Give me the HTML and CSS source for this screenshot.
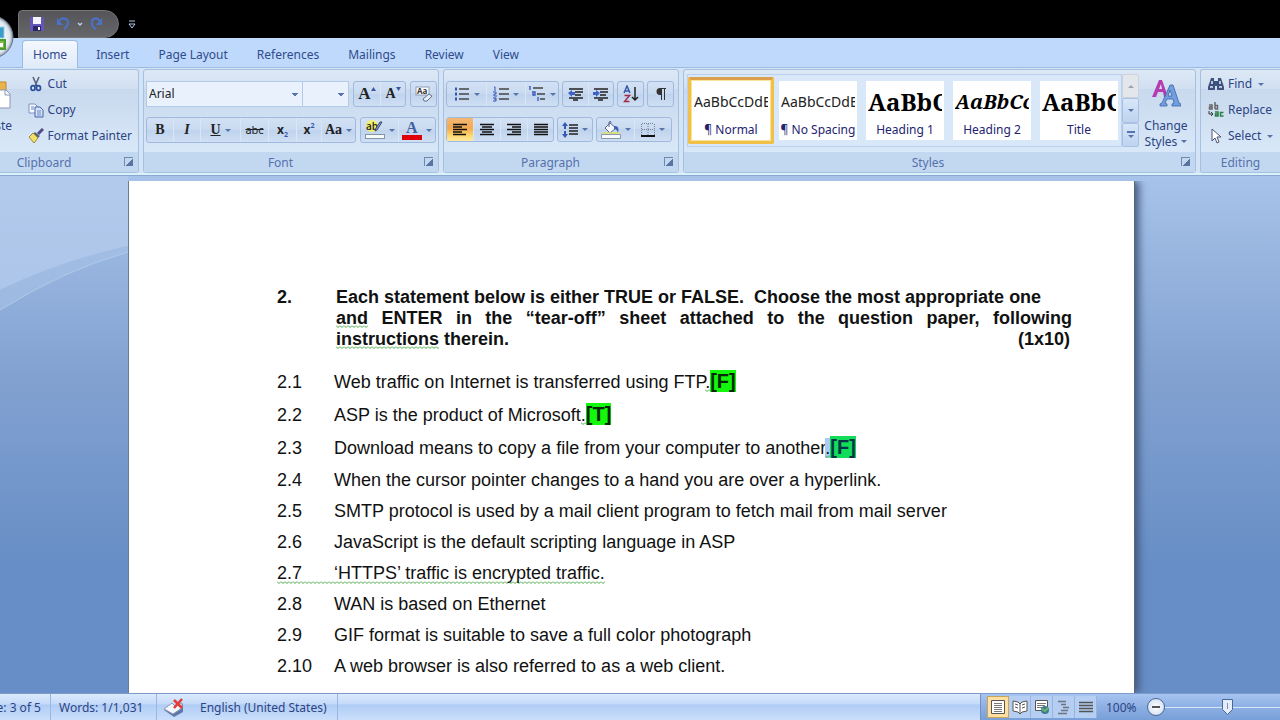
FILE: index.html
```html
<!DOCTYPE html>
<html lang="en">
<head>
<meta charset="utf-8">
<title>Word document</title>
<link rel="stylesheet" href="styles.css">
</head>
<body>
<div class="app">
  <header class="titlebar">
    <div class="quick">
      <button aria-label="Save"><svg width="16" height="16" viewBox="0 0 16 16"><path d="M1 1h13l1 1v13H1z" fill="#6557b8"/><path d="M4 1h8v7H4z" fill="#f6f6ff"/><path d="M4 10h8v5H4z" fill="#29276e"/><path d="M9 11h2v3H9z" fill="#fff"/></svg></button>
      <button aria-label="Undo"><svg width="16" height="16" viewBox="0 0 16 16" fill="none"><path d="M4 5c4-5 10-2 9 3-1 2-2 4-4 5" stroke="#4a72c8" stroke-width="2"/><path d="M2 2v7h6z" fill="#4a72c8"/></svg></button>
      <button class="tiny" aria-label="Undo list"><svg width="6" height="5" viewBox="0 0 6 5"><path d="M1 1l2 2 2-2" fill="none" stroke="#b9c9ea" stroke-width="1.5"/></svg></button>
      <button aria-label="Redo"><svg width="16" height="16" viewBox="0 0 16 16" fill="none"><path d="M11 5C7 0 2 3 3 8c0 3 2 4 4 5" stroke="#4a72c8" stroke-width="2"/><path d="M13 2v7H7z" fill="#4a72c8"/></svg></button>
    </div>
    <button class="custom" aria-label="Customize toolbar"><svg width="8" height="9" viewBox="0 0 8 9"><path d="M1 1h6M1 4h6L4 8z" fill="none" stroke="#b5c7ed"/></svg></button>
    <button class="orb" aria-label="Office button"><svg width="44" height="44" viewBox="0 0 44 44"><defs><radialGradient id="orb"><stop offset=".5" stop-color="#fff"/><stop offset=".85" stop-color="#dce4ee"/><stop offset="1" stop-color="#8795a9"/></radialGradient></defs><circle cx="22" cy="22" r="21" fill="url(#orb)" stroke="#6b7686"/><rect x="24" y="12" width="10" height="11" fill="#3d9cc5" stroke="#8fd1e6"/><rect x="25" y="25" width="10" height="9" fill="#80b944" stroke="#4c9b31" stroke-width="2"/><rect x="29" y="28" width="4" height="4" fill="#fff"/></svg></button>
  </header>
  <nav class="tabs">
    <a class="tab active" href="#">Home</a><a class="tab" href="#">Insert</a><a class="tab" href="#">Page Layout</a><a class="tab" href="#">References</a><a class="tab" href="#">Mailings</a><a class="tab" href="#">Review</a><a class="tab" href="#">View</a>
  </nav>
  <div class="ribbon">
    <section class="group clipboard">
      <div class="body">
        <button class="paste"><svg width="28" height="32" viewBox="0 0 28 32"><path d="M2 4h21v23H2z" fill="#e9b44c" stroke="#bd8a2c"/><path d="M8 1h9v6H8z" fill="#aab4c4"/><path d="M12 12h11l4 4v14H12z" fill="#fff" stroke="#8b96b4"/><path d="M22 12v5h5" fill="none" stroke="#8b96b4"/></svg><span>Paste</span></button>
        <div class="stack">
          <button class="cmd"><svg width="16" height="16" viewBox="0 0 16 16" fill="none"><path d="M5 1l4 9M11 1L7 10" stroke="#56647f" stroke-width="1.6"/><ellipse cx="5" cy="12" rx="2" ry="2.4" stroke="#2d4fa0" stroke-width="1.7"/><ellipse cx="10.500" cy="12" rx="2" ry="2.400" stroke="#2d4fa0" stroke-width="1.7"/></svg>Cut</button>
          <button class="cmd"><svg width="16" height="16" viewBox="0 0 16 16"><path d="M1 2h6l2 2v7H1z" fill="#f6f9ff" stroke="#7d92c2"/><path d="M7 5h5l3 3v7H7z" fill="#d7e3fa" stroke="#4560a5"/><path d="M9 9h4M9 11h4M9 13h4M3 5h3M3 7h3" stroke="#6d88c5"/></svg>Copy</button>
          <button class="cmd"><svg width="16" height="16" viewBox="0 0 16 16"><path d="M15 1l-5 5" stroke="#514b88" stroke-width="3"/><path d="M7 4l5 4-2 2-5-4z" fill="#5b6478"/><path d="M5 5l5 5-4 5-5-6z" fill="#f0df69" stroke="#9a8a3a"/></svg>Format Painter</button>
        </div>
      </div>
      <footer class="label"><span>Clipboard</span><button class="launch" aria-label="Clipboard options"></button></footer>
    </section>
    <section class="group font">
      <div class="body rows">
        <div class="row">
          <div class="pair"><select class="family" aria-label="Font"><option>Arial</option></select><select class="size" aria-label="Font size"><option></option></select></div>
          <div class="set"><button class="w26 serif big" aria-label="Grow font">A<svg class="sup" width="5" height="4" viewBox="0 0 5 4"><path d="M0 4l2.500-4L5 4z" fill="#39599e"/></svg></button><button class="w25 serif" aria-label="Shrink font">A<svg class="sup" width="5" height="4" viewBox="0 0 5 4"><path d="M0 0h5L2.500 4z" fill="#39599e"/></svg></button></div>
          <div class="set"><button class="w25" aria-label="Clear formatting"><svg width="18" height="18" viewBox="0 0 18 18"><rect x="1" y="2" width="13" height="8" fill="#fff" stroke="#8e9bb6"/><text x="2" y="9" font-family="Open Sans, sans-serif" font-size="8" font-weight="700" fill="#333">Aa</text><path d="M8 14l6-5 3 2-5 5H9z" fill="#e9edf6" stroke="#65728f"/></svg></button></div>
        </div>
        <div class="row">
          <div class="set"><button class="w26 serif">B</button><button class="w27 serif"><i>I</i></button><button class="w40 serif" aria-label="Underline"><u>U</u><b class="arrow"></b></button><button class="w28 small"><s>abc</s></button><button class="w28 cross" aria-label="Subscript">x<sub>2</sub></button><button class="w25 cross" aria-label="Superscript">x<sup>2</sup></button><button class="w34 serif" aria-label="Change case">Aa<b class="arrow"></b></button></div>
          <div class="set"><button class="w37" aria-label="Highlight"><svg width="20" height="20" viewBox="0 0 20 20"><circle cx="7" cy="6" r="6" fill="#f2f06a"/><text x="1" y="10" font-family="Open Sans, sans-serif" font-size="10" font-weight="600" fill="#222">ab</text><path d="M17 2l-5 8-2 1 1-3 4-6z" fill="#8ba0cf" stroke="#35466f"/><rect x=".5" y="14.500" width="19" height="4" fill="#f7fbff" stroke="#8695a5"/></svg><b class="arrow"></b></button><button class="w37" aria-label="Font color"><svg width="20" height="20" viewBox="0 0 20 20"><text x="4" y="13" font-family="Liberation Serif, serif" font-size="16" font-weight="700" fill="#3f5f9f">A</text><path d="M0 15h20v5H0z" fill="#e00008"/></svg><b class="arrow"></b></button></div>
        </div>
      </div>
      <footer class="label"><span>Font</span><button class="launch" aria-label="Font options"></button></footer>
    </section>
    <section class="group paragraph">
      <div class="body rows">
        <div class="row">
          <div class="set"><button class="w39" aria-label="Bullets"><svg width="16" height="16" viewBox="0 0 16 16"><path d="M5 3h10M5 8h10M5 13h10" stroke="#444" stroke-width="1.300"/><path d="M1 3h2M1 8h2M1 13h2" stroke="#3454b4" stroke-width="3"/></svg><b class="arrow"></b></button><button class="w39" aria-label="Numbering"><svg width="16" height="16" viewBox="0 0 16 16"><path d="M6 3h10M6 8h10M6 13h10" stroke="#444" stroke-width="1.300"/><path d="M1 1h1v4M0 6h3v2H1v2h3M0 12h3v3H0M1 13h2" fill="none" stroke="#3454b4"/></svg><b class="arrow"></b></button><button class="w33" aria-label="Multilevel list"><svg width="18" height="16" viewBox="0 0 18 16"><path d="M5 2h10M9 8h8M12 13h5" stroke="#444" stroke-width="1.300"/><path d="M1 0h1v4M4 6h3v3H5v-2M10 11v4" fill="none" stroke="#3454b4" stroke-width="1.300"/></svg><b class="arrow"></b></button></div>
          <div class="set"><button class="w25" aria-label="Decrease indent"><svg width="16" height="16" viewBox="0 0 16 16"><path d="M1 3h14M7 6h8M7 9h6M1 12h14M5 14h5" stroke="#222" stroke-width="1.500"/><path d="M0 7l4-3v2h3v3H4v2z" fill="#3c62c8"/></svg></button><button class="w25" aria-label="Increase indent"><svg width="16" height="16" viewBox="0 0 16 16"><path d="M1 3h14M7 6h8M7 9h6M1 12h14M5 14h5" stroke="#222" stroke-width="1.500"/><path d="M7 7L3 4v2H0v3h3v2z" fill="#3c62c8"/></svg></button></div>
          <div class="set"><button class="w25" aria-label="Sort"><svg width="16" height="18" viewBox="0 0 16 18"><g fill="none" stroke-width="1.500"><path d="M1 8l3-7 3 7M2 6h4" stroke="#3658ae"/><path d="M1.500 10.500h5l-5 6h5" stroke="#a32d49"/><path d="M12 2v13M9 12l3 3 3-3" stroke="#222"/></g></svg></button></div>
          <div class="set"><button class="w25" aria-label="Show marks"><svg width="14" height="14" viewBox="0 0 14 14"><path d="M12 1H6a3 3 0 000 7h1v5h1V2h2v11h1V2h1z" fill="#333"/></svg></button></div>
        </div>
        <div class="row low">
          <div class="set"><button class="w26 on" aria-label="Align left"><svg width="16" height="14" viewBox="0 0 16 14"><path d="M1 1.500h14M1 4h9M1 6.500h14M1 9h9M1 11.500h13" stroke="#111" stroke-width="1.300"/></svg></button><button class="w27" aria-label="Center"><svg width="16" height="14" viewBox="0 0 16 14"><path d="M1 1.500h14M3 4h10M1 6.500h14M3 9h10M1 11.500h14" stroke="#111" stroke-width="1.300"/></svg></button><button class="w27" aria-label="Align right"><svg width="16" height="14" viewBox="0 0 16 14"><path d="M1 1.500h14M6 4h9M1 6.500h14M6 9h9M1 11.500h14" stroke="#111" stroke-width="1.300"/></svg></button><button class="w26" aria-label="Justify"><svg width="16" height="14" viewBox="0 0 16 14"><path d="M1 1.500h14M1 4h14M1 6.500h14M1 9h14M1 11.500h14" stroke="#111" stroke-width="1.300"/></svg></button></div>
          <div class="set"><button class="w34" aria-label="Line spacing"><svg width="16" height="16" viewBox="0 0 16 16"><path d="M7 3h9M7 6h9M7 9h9M7 12h9" stroke="#222" stroke-width="1.300"/><path d="M3 0L0 4h2v3h2V4h2zM3 16l-3-4h2V9h2v3h2z" fill="#3559b4"/></svg><b class="arrow"></b></button></div>
          <div class="set"><button class="w37" aria-label="Shading"><svg width="20" height="18" viewBox="0 0 20 18"><path d="M9 2l6 5-6 5-5-5z" fill="#f7f8ff" stroke="#56658c"/><path d="M8 6V1q2-2 2 1" fill="none" stroke="#56658c"/><path d="M13 5q6-1 4 7-1-4-4-4z" fill="#3e62b5"/><path d="M1 12h18" stroke="#dbe264" stroke-width="1.500"/><path d="M.5 13.500h19v4H.5z" fill="#f8fbff" stroke="#8b98a9"/></svg><b class="arrow"></b></button><button class="w37" aria-label="Borders"><svg width="14" height="14" viewBox="0 0 14 14"><path d="M1 .5h12M.5 1v11M13.500 1v11M7 1v11M1 6.500h12" stroke="#777f98" stroke-dasharray="1 1"/><path d="M0 13h14" stroke="#111" stroke-width="2"/></svg><b class="arrow"></b></button></div>
        </div>
      </div>
      <footer class="label"><span>Paragraph</span><button class="launch" aria-label="Paragraph options"></button></footer>
    </section>
    <section class="group styles">
      <div class="body">
        <div class="gallery">
          <button class="style chosen"><span class="sample">AaBbCcDdE</span><span>¶ Normal</span></button>
          <button class="style"><span class="sample">AaBbCcDdE</span><span>¶ No Spacing</span></button>
          <button class="style"><span class="sample head">AaBbC</span><span>Heading 1</span></button>
          <button class="style"><span class="sample head2">AaBbCc</span><span>Heading 2</span></button>
          <button class="style"><span class="sample head">AaBbC</span><span>Title</span></button>
        </div>
        <div class="scroll"><button class="dim" aria-label="Up"><b class="arrow up"></b></button><button aria-label="Down"><b class="arrow"></b></button><button class="more" aria-label="More"><b class="arrow"></b></button></div>
        <button class="change"><svg width="30" height="30" viewBox="0 0 30 30"><path d="M1 19L8 2h3l6 17h-4l-1-5H7l-2 5zM8 11h3L10 6z" fill="#b43cae"/><path d="M9 28v-2l2-1 8-18h3l6 18 2 1v2h-9v-2l2-1-1-4h-6l-2 4 2 1v2zM17 18h4l-2-6z" fill="#6f9fe0" stroke="#3f63a7" stroke-width=".8"/></svg><span>Change</span><span>Styles <b class="arrow"></b></span></button>
      </div>
      <footer class="label"><span>Styles</span><button class="launch" aria-label="Styles options"></button></footer>
    </section>
    <section class="group editing">
      <div class="body">
        <div class="stack">
          <button class="cmd"><svg width="16" height="16" viewBox="0 0 16 16"><path d="M3 2h3v3h4V2h3l3 9v3H9v-4H7v4H0v-3z" fill="#3e527e"/><path d="M2 11h3M11 11h3M4 5v3M12 5v3" stroke="#dce7fb" stroke-width="1.500"/></svg>Find<b class="arrow"></b></button>
          <button class="cmd"><svg width="16" height="16" viewBox="0 0 16 16"><g fill="none" stroke-width="1.500"><path d="M1 3h3v4H1.500V5H4M7 0v7M7 3.500h2.500V7H7" stroke="#666"/><path d="M7 10h3v4H7.500v-2H10M15.500 10.500h-3v3.500h3" stroke="#278044"/><path d="M1 9v3h4M3 10l2 2-2 2" stroke="#333" stroke-width="1"/></g></svg>Replace</button>
          <button class="cmd"><svg width="16" height="16" viewBox="0 0 16 16"><path d="M4 1v12l3-3 2 5 2-1-2-5h4z" fill="#fff" stroke="#4d5673"/></svg>Select<b class="arrow"></b></button>
        </div>
      </div>
      <footer class="label"><span>Editing</span></footer>
    </section>
  </div>
  <main class="workspace">
    <svg class="swoosh" width="128" height="140" viewBox="0 0 128 140"><path d="M0 0h128v70Q60 85 0 114z" fill="#b8cfee" opacity=".7"/><path d="M0 114Q60 85 128 70v6Q64 94 0 134z" fill="#a8c2e5" opacity=".6"/><path d="M0 134Q64 94 128 76" fill="none" stroke="#b0cbec"/></svg>
    <article class="page">
      <div class="line question"><span>2.</span>
        <div class="prompt"><div>Each statement below is either TRUE or FALSE.&nbsp; Choose the most appropriate one</div><div class="justify"><span class="wavy">and</span> ENTER in the “tear-off” sheet attached to the question paper, following</div><div class="ends"><span><span class="wavy">instructions</span> therein.</span><span>(1x10)</span></div></div>
      </div>
      <div class="line tall"><span>2.1</span><p>Web traffic on Internet is transferred using FTP<span class="wavy">.</span><mark>[F]</mark></p></div>
      <div class="line tall"><span>2.2</span><p>ASP is the product of Microsoft<span class="wavy">.</span><mark>[T]</mark></p></div>
      <div class="line tall"><span>2.3</span><p>Download means to copy a file from your computer to another<span class="wavy picked">.</span><mark class="picked">[F]</mark></p></div>
      <div class="line"><span>2.4</span><p>When the cursor pointer changes to a hand you are over a hyperlink.</p></div>
      <div class="line"><span>2.5</span><p>SMTP protocol is used by a mail client program to fetch mail from mail server</p></div>
      <div class="line"><span>2.6</span><p>JavaScript is the default scripting language in ASP</p></div>
      <div class="line"><div class="wavy whole"><span>2.7</span><p>‘HTTPS’ traffic is encrypted traffic.</p></div></div>
      <div class="line"><span>2.8</span><p>WAN is based on Ethernet</p></div>
      <div class="line"><span>2.9</span><p>GIF format is suitable to save a full color photograph</p></div>
      <div class="line"><span>2.10</span><p>A web browser is also referred to as a web client.</p></div>
    </article>
  </main>
  <footer class="status">
    <div class="cell pageno">Page: 3 of 5</div>
    <div class="cell words">Words: 1/1,031</div>
    <div class="cell lang"><svg width="22" height="20" viewBox="0 0 22 20"><path d="M1 12l8-6 4 3 7-3v8l-9 5z" fill="#5d78a8"/><path d="M1 11l8-6 3 3 7-3v5l-9 6z" fill="#f3f6fc" stroke="#8796b4"/><path d="M11 2l8 8M19 1l-8 9" stroke="#e43c35" stroke-width="2.500"/></svg><span>English (United States)</span></div>
    <div class="cell rest"></div>
    <div class="views">
      <button class="on" aria-label="Print layout"><svg width="16" height="16" viewBox="0 0 16 16"><path d="M1.500 1.500h13v13h-13z" fill="#fff" stroke="#555"/><path d="M4 4.500h8M4 6.500h8M4 8.500h8M4 10.500h8M4 12.500h8" stroke="#777"/></svg></button>
      <button aria-label="Reading"><svg width="16" height="16" viewBox="0 0 16 16"><path d="M1 2l5 1 2 2 2-2 5-1v10l-5 1-2 2-2-2-5-1z" fill="#fff" stroke="#555"/><path d="M8 5v9M3 5l3 1M3 8l3 1M10 6l3-1M10 9l3-1" stroke="#555"/></svg></button>
      <button aria-label="Web layout"><svg width="16" height="16" viewBox="0 0 16 16"><path d="M1.500 1.500h12v10h-12z" fill="#fff" stroke="#555"/><path d="M3 4.500h9M3 6.500h8M3 8.500h6" stroke="#777"/><circle cx="11" cy="11" r="4" fill="#397d91"/><path d="M8 10l3 2 3-3" stroke="#6bb66a" stroke-width="2" fill="none"/></svg></button>
      <button aria-label="Outline"><svg width="16" height="16" viewBox="0 0 16 16"><path d="M2 2.500h8M5 5.500h5M7 8.500h6M5 11.500h7M2 14.500h9" stroke="#6d7582" stroke-width="1.300"/></svg></button>
      <button aria-label="Draft"><svg width="16" height="16" viewBox="0 0 16 16"><path d="M1 3.500h14M1 6.500h14M1 9.500h14M1 12.500h14" stroke="#555" stroke-width="1.500"/></svg></button>
    </div>
    <span class="percent">100%</span>
    <button class="minus" aria-label="Zoom out"></button>
    <input class="zoom" type="range" min="0" max="100" value="55" aria-label="Zoom">
  </footer>
</div>
</body>
</html>
```

FILE: styles.css
```css
* { box-sizing: border-box; }
body { margin: 0; font: 12px/16px "Noto Sans", "Open Sans", sans-serif; color: #2b4484; }
button { font: inherit; color: inherit; background: none; border: 0; padding: 0; margin: 0; display: flex; align-items: center; justify-content: center; }
svg { flex: none; display: block; }
.app { display: flex; flex-direction: column; height: 100vh; min-height: 480px; overflow: hidden; }
.arrow { flex: none; display: inline-block; border: 3px solid transparent; border-top-color: #5775ad; border-bottom: 0; }
.arrow.up { border-top: 0; border-bottom: 3px solid #9aa3b2; }

.titlebar { position: relative; z-index: 1; display: flex; align-items: flex-end; flex: none; height: 38px; background: #000; padding: 0 0 0 18px; }
.quick { display: flex; align-items: center; gap: 10px; height: 28px; padding: 0 13px 0 10px; border: 1px solid #777; border-radius: 4px 14px 14px 0; background: linear-gradient(#555559, #66676b); }
.quick .tiny { margin: 0 -4px; }
.custom { height: 28px; margin-left: 9px; }
.orb { position: absolute; left: -30px; top: 15px; }

.tabs { display: flex; flex: none; height: 30px; padding: 2px 0 0 22px; background: #bfd9fc; border-bottom: 1px solid #9bbbe3; }
.tab { display: flex; align-items: center; margin-bottom: -1px; padding: 1px 10px 0; border: 1px solid transparent; color: #304b8c; text-decoration: none; margin-right: 7px; }
.tab.active { border-color: #9bbbe3; border-bottom: 0; border-radius: 4px 4px 0 0; background: linear-gradient(#f4f8fe, #dfeaf8); }

.ribbon { display: flex; flex: none; gap: 4px; height: 108px; padding: 1px 0 2px; background: #d4e4f7; border-bottom: 1px solid #8ba8cf; box-shadow: inset 0 -2px #d9f2fa; overflow: hidden; }
.group { display: flex; flex-direction: column; flex: none; border: 1px solid #a6c0e0; border-radius: 3px; background: linear-gradient(#dde8f5, #d2e0f2 18%, #c8d9ee 19%, #d9e8f8 80%); overflow: hidden; }
.body { display: flex; flex: 1; min-height: 0; }
.label { display: flex; align-items: center; flex: none; height: 20px; padding-top: 2px; background: #c2d8f0; color: #5671ad; }
.label span { flex: 1; text-align: center; padding-right: 7px; }
.launch { width: 9px; height: 9px; margin: 0 5px 4px 0; border: solid #7188b0; border-width: 1px 0 0 1px; background: linear-gradient(135deg, transparent 55%, #5a739f 56%); }
.clipboard { width: 139px; border-left: 0; border-radius: 0 3px 3px 0; }
.clipboard .body { justify-content: flex-end; padding-right: 6px; }
.clipboard .label span { padding-right: 45px; }
.clipboard .launch { margin-left: -9px; }
.paste { flex: none; flex-direction: column; justify-content: flex-start; gap: 8px; width: 36px; margin-right: 13px; padding-top: 8px; }
.stack { display: flex; flex-direction: column; flex: none; gap: 10px; padding-top: 6px; }
.cmd { justify-content: flex-start; gap: 4px; height: 16px; white-space: nowrap; }
.cmd .arrow { margin-left: 2px; }

.font { width: 296px; }
.paragraph { width: 236px; }
.rows { flex-direction: column; gap: 10px; padding: 11px 2px 0; }
.row { display: flex; gap: 4px; }
.paragraph .row { gap: 3px; }
.set { display: flex; flex: none; height: 26px; border: 1px solid #a0b9de; border-radius: 3px; background: linear-gradient(#d3e1f4, #c9daf0 48%, #bfd3ed 50%, #cfdff3); }
.low .set { height: 25px; }
.set button { gap: 4px; color: #222; border-left: 1px solid #d9e6f6; }
.set button:first-child { border-left: 0; }
.set .on { background: linear-gradient(#f2b878, #f6a94e 45%, #ffd66d 75%, #ffeaa0); }
.w25 { width: 25px; } .w26 { width: 26px; } .w27 { width: 27px; } .w28 { width: 28px; }
.w33 { width: 33px; } .w34 { width: 34px; } .w37 { width: 37px; } .w39 { width: 39px; } .w40 { width: 40px; }
.serif { font: bold 14px/16px "Liberation Serif", serif; }
.big { font-size: 17px; }
.set .big, .set .w25.serif { gap: 0; }
.sup { align-self: flex-start; margin-top: 5px; }
.small { font-size: 11px; }
.cross { font-weight: 700; }
.set .cross { gap: 0; }
.cross sub, .cross sup { font-size: 7px; line-height: 8px; color: #3658b0; }
.cross sub { align-self: flex-end; margin-bottom: 3px; }
.cross sup { align-self: flex-start; margin-top: 4px; }
.pair { display: flex; height: 26px; }
select { appearance: none; border: 1px solid #b3cae8; border-radius: 0; padding: 0 2px; font: inherit; color: #222; background: linear-gradient(to bottom right, #5775ad 50%, transparent 51%) right 4px center / 3px 3px no-repeat, linear-gradient(to bottom left, #5775ad 50%, transparent 51%) right 7px center / 3px 3px no-repeat, #e9f1fc; }
.family { width: 157px; }
.size { width: 46px; border-left: 0; }

.styles { flex: 1 0 512px; }
.styles .label span { padding-right: 9px; }
.styles .body { padding: 4px 2px 5px 3px; }
.gallery { display: flex; flex: 1; gap: 1px; border: 1px solid #bad0ec; background: #d9e8f9; overflow: hidden; padding-top: 2px; }
.style { flex: none; width: 86px; height: 67px; flex-direction: column; justify-content: flex-start; border: 4px solid #d9e8f9; background: #fff; color: #23236f; padding-top: 2px; white-space: nowrap; overflow: hidden; }
.style.chosen { border: 3px solid #f0c048; border-top-color: #dc9f4c; border-radius: 2px; box-shadow: inset 0 0 0 1px #fae49c; padding-top: 3px; }
.sample { width: 74px; height: 39px; line-height: 37px; font-size: 14px; color: #222; text-align: left; overflow: hidden; }
.head { font: bold 24px/37px "Noto Serif", "Liberation Serif", serif; color: #000; }
.head2 { font: italic bold 20px/37px "Noto Serif", "Liberation Serif", serif; color: #000; }
.scroll { display: flex; flex-direction: column; flex: none; width: 17px; }
.scroll button { flex: 1; border: 1px solid #a9c2e4; border-radius: 2px; background: linear-gradient(#d8e7f9, #bed3ef); }
.scroll .dim { background: #e3e6eb; border-color: #cdd3dd; }
.scroll .more { flex-direction: column; gap: 2px; }
.more::before { content: ""; width: 8px; height: 2px; background: #5775ad; }
.change { flex: none; flex-direction: column; justify-content: flex-start; width: 54px; padding-top: 4px; }
.change svg { margin-bottom: 10px; }
.change .arrow { margin: 0 0 3px 1px; }
.editing { width: 80px; border-right: 0; border-radius: 3px 0 0 3px; }
.editing .stack { padding-left: 7px; }
.editing .label span { padding: 0; }

.workspace { position: relative; display: flex; flex: 1; min-height: 0; padding: 5px 145px 0 128px; background: linear-gradient(#a7c3ea, #83a2d1 38%, #678ec6 75%, #678ec6); }
.swoosh { position: absolute; left: 0; top: 0; }
.page { position: relative; flex: 1; padding: 106px 62px 0 148px; background: #fff; border-left: 1px solid #6b7b94; border-right: 1px solid #59677e; box-shadow: 4px 0 8px #43597f; font: 18px/21px "Liberation Sans", Arial, sans-serif; color: #111; overflow: hidden; clip-path: inset(0 -15px 0 0); }
.line { display: flex; align-items: center; height: 31px; white-space: nowrap; }
.line > span, .whole > span { flex: none; width: 57px; }
.tall { height: 33px; }
.question { align-items: flex-start; height: auto; margin-bottom: 16px; font-weight: 700; }
.prompt { flex: 1; padding-left: 2px; }
.justify { text-align: justify; text-align-last: justify; white-space: normal; }
.ends { display: flex; justify-content: space-between; padding-right: 2px; }
p { margin: 0; }
.wavy { background: url("data:image/svg+xml,%3Csvg xmlns='http://www.w3.org/2000/svg' width='4' height='3'%3E%3Cpath d='M0 .5l2 2 2-2' fill='none' stroke='%2344aa44'/%3E%3C/svg%3E") left bottom repeat-x; }
.whole { display: flex; }
mark { line-height: 18px; font-size: 20px; font-weight: 700; background: #12f70b; color: #062806; }
.picked { background-color: #a9cdf0; }
mark.picked { background: #12dc58; color: #063548; }

.status { display: flex; align-items: center; flex: none; height: 27px; border-top: 1px solid #7d9bc8; background: linear-gradient(#dceafc, #c5dafa 38%, #b0ccf5 42%, #cbdffb) left / calc(100% - 300px) 100% no-repeat, linear-gradient(#a7c5f1, #8fb1e4 45%, #789fd8); overflow: hidden; white-space: nowrap; }
.cell { display: flex; align-items: center; height: 26px; border-right: 1px solid #9ab7e1; padding-top: 1px; }
.pageno { width: 51px; justify-content: flex-end; padding-right: 9px; overflow: hidden; }
.words { width: 106px; padding-left: 8px; }
.lang { width: 181px; gap: 15px; padding-left: 6px; }
.rest { flex: 1; border-color: #7192c6; }
.views { display: flex; align-items: center; height: 26px; padding: 2px 9px 2px 6px; }
.views button { width: 22px; height: 22px; background: #b5cef2; border-right: 1px solid #95b4df; }
.views .on { background: #ffe0a0; border: 1px solid #c7a65c; }
.percent { align-self: stretch; display: flex; align-items: center; width: 41px; padding-top: 1px; }
.percent, .minus, .zoom { flex-shrink: 0; }
.minus { width: 18px; height: 18px; border: 1px solid #4a679b; border-radius: 50%; background: linear-gradient(#555, #555) center / 8px 2px no-repeat, radial-gradient(#fff, #cbd9ed); }
.zoom { appearance: none; width: 115px; height: 20px; margin: 0; background: linear-gradient(#d9e7fb, #d9e7fb) center / 100% 1px no-repeat; }
.zoom::-webkit-slider-thumb { appearance: none; width: 11px; height: 16px; background: url("data:image/svg+xml,%3Csvg xmlns='http://www.w3.org/2000/svg' width='11' height='16'%3E%3Cpath d='M.5 .5h10v10l-5 5-5-5z' fill='%23e4edf9' stroke='%234a679b'/%3E%3Cpath d='M5.500 4v6' stroke='%237a94bf'/%3E%3C/svg%3E") no-repeat; }
```
